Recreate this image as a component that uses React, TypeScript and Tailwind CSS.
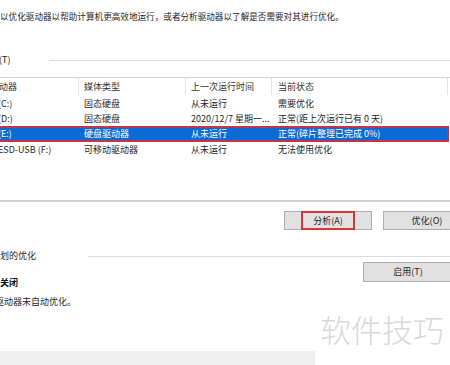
const font = { fontFamily: '"Noto Sans CJK SC", "Noto Sans", sans-serif' }

type Row = {
  drive: string
  media: string
  last: string
  status: string
  selected?: boolean
}

const rows: Row[] = [
  { drive: '(C:)', media: '固态硬盘', last: '从未运行', status: '需要优化' },
  {
    drive: '(D:)',
    media: '固态硬盘',
    last: '2020/12/7 星期一...',
    status: '正常(距上次运行已有 0 天)'
  },
  {
    drive: '(E:)',
    media: '硬盘驱动器',
    last: '从未运行',
    status: '正常(碎片整理已完成 0%)',
    selected: true
  },
  { drive: 'ESD-USB (F:)', media: '可移动驱动器', last: '从未运行', status: '无法使用优化' }
]

function DriveRow({ row }: { row: Row }) {
  if (row.selected) {
    return (
      <div className="grid grid-cols-[79px_107px_86px_176px] h-[16px] w-[449px] bg-[#0a6bd4] border-y-2 border-r-2 border-[#c23447] text-white items-center">
        <span className="-ml-[2px] whitespace-nowrap">{row.drive}</span>
        <span className="pl-[5px] whitespace-nowrap">{row.media}</span>
        <span className="pl-[5px] whitespace-nowrap">{row.last}</span>
        <span className="pl-[6px] whitespace-nowrap">{row.status}</span>
      </div>
    )
  }
  return (
    <div className="grid grid-cols-[79px_107px_86px_176px] h-[15px] items-center">
      <span className="-ml-[2px] whitespace-nowrap">{row.drive}</span>
      <span className="pl-[5px] whitespace-nowrap">{row.media}</span>
      <span className="pl-[5px] whitespace-nowrap">{row.last}</span>
      <span className="pl-[6px] whitespace-nowrap">{row.status}</span>
    </div>
  )
}

export default function App() {
  return (
    <div
      className="relative w-[450px] h-[365px] overflow-hidden bg-white text-[9px] leading-[12px] text-[#1e1e1e]"
      style={font}
    >
      <p className="pt-[10px] whitespace-nowrap text-[8.6px]">
        以优化驱动器以帮助计算机更高效地运行，或者分析驱动器以了解是否需要对其进行优化。
      </p>

      <div className="mt-[32px] flex items-center h-[12px]">
        <span className="w-[50px] -ml-[1px]">(T)</span>
        <div className="flex-1 h-px bg-[#dcdcdc]" />
      </div>

      {/* drive list */}
      <div className="mt-[11px] border-t border-[#d4d4d4] h-[125px] border-b-2 border-b-[#cfcfcf]">
        <div className="grid grid-cols-[79px_107px_86px_176px_1px] h-[17px] items-center text-[#333]">
          <span className="-ml-[1px] border-r border-[#e5e5e5] h-full flex items-center">动器</span>
          <span className="pl-[5px] border-r border-[#e5e5e5] h-full flex items-center">媒体类型</span>
          <span className="pl-[5px] border-r border-[#e5e5e5] h-full flex items-center">上一次运行时间</span>
          <span className="pl-[6px] border-r border-[#e5e5e5] h-full flex items-center">当前状态</span>
        </div>
        <div className="pt-px">
          {rows.map((r) => (
            <DriveRow key={r.drive} row={r} />
          ))}
        </div>
      </div>

      <div className="mt-[9px] ml-[284px] flex gap-[11px] h-[19px]">
        <button className="w-[88px] shrink-0 h-full bg-[#e1e1e1] border border-[#adadad] flex items-center justify-center">
          <span className="w-[54px] h-[19px] -my-px border-2 border-[#d9363b] flex items-center justify-center">
            分析(A)
          </span>
        </button>
        <button className="w-[88px] shrink-0 h-full bg-[#e1e1e1] border border-[#adadad] flex items-center justify-center">
          优化(O)
        </button>
      </div>

      <div className="mt-[20px] flex items-center h-[12px]">
        <span className="w-[88px] whitespace-nowrap">划的优化</span>
        <div className="flex-1 h-px bg-[#dcdcdc]" />
      </div>

      <div className="flex">
        <div className="flex-1 pt-[15px]">
          <p className="font-bold text-[#111]">关闭</p>
          <p className="mt-[7px] -ml-[5px] whitespace-nowrap">驱动器未自动优化。</p>
        </div>
        <button className="w-[90px] h-[20px] -mr-[3px] bg-[#e1e1e1] border border-[#adadad] flex items-center justify-center">
          启用(T)
        </button>
      </div>

      <div className="mt-[43px] w-[315px] h-[20px] bg-[#f0f0f0]" />

      <div
        className="absolute left-[320px] top-[311px] text-[31px] leading-[36px] text-[#d8d8d8] whitespace-nowrap"
        style={{ fontFamily: '"Noto Sans CJK SC", sans-serif', fontWeight: 300 }}
      >
        软件技巧
      </div>
    </div>
  )
}
